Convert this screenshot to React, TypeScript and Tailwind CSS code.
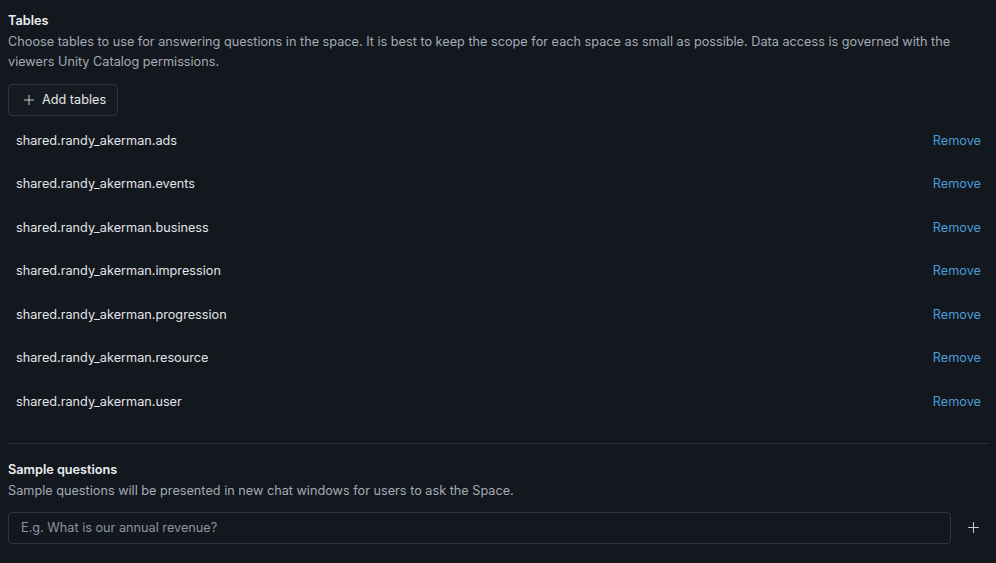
import { Plus } from "lucide-react";

const tables = [
  "shared.randy_akerman.ads",
  "shared.randy_akerman.events",
  "shared.randy_akerman.business",
  "shared.randy_akerman.impression",
  "shared.randy_akerman.progression",
  "shared.randy_akerman.resource",
  "shared.randy_akerman.user",
];

export default function App() {
  return (
    <div
      className="min-h-[563px] w-full bg-[#13171e] pl-2 pr-[7px] pt-[11px] text-[12.7px] leading-5 text-[#e6e8eb]"
      style={{ fontFamily: "Inter, 'Noto Sans', sans-serif" }}
    >
      <section>
        <h2 className="font-semibold text-[#eceef0]">Tables</h2>
        <p className="mt-px text-[#a3abb5]">
          Choose tables to use for answering questions in the space. It is best to keep the scope for each space as small as
          possible. Data access is governed with the viewers Unity Catalog permissions.
        </p>
        <button
          type="button"
          className="mt-[12px] flex h-8 items-center gap-[5px] rounded border border-[#30363e] bg-[#161a21] pl-[12px] pr-[11px] text-[#e4e6e9]"
        >
          <Plus size={16} strokeWidth={1.5} className="text-[#c9cdd2]" />
          Add tables
        </button>
        <ul className="mt-[3px]">
          {tables.map((name) => (
            <li key={name} className="flex h-[43.5px] items-center justify-between px-2">
              <span className="text-[#e1e4e8]">{name}</span>
              <button type="button" className="text-[#4b9dd8]">
                Remove
              </button>
            </li>
          ))}
        </ul>
      </section>

      <div className="mt-[19px] h-px bg-[#262e35]" />

      <section className="pt-[16px]">
        <h2 className="font-semibold text-[#eceef0]">Sample questions</h2>
        <p className="mt-px text-[#a3abb5]">Sample questions will be presented in new chat windows for users to ask the Space.</p>
        <div className="mt-[11px] flex items-center gap-[14px]">
          <input
            placeholder="E.g. What is our annual revenue?"
            className="h-8 flex-1 rounded border border-[#30363e] bg-[#13171e] px-3 text-[12.7px] text-[#e6e8eb] outline-none placeholder:text-[#8d959f]"
          />
          <button type="button" className="mr-[7px] flex items-center text-[#c6cbd1]">
            <Plus size={17} strokeWidth={1.5} />
          </button>
        </div>
      </section>
    </div>
  );
}
